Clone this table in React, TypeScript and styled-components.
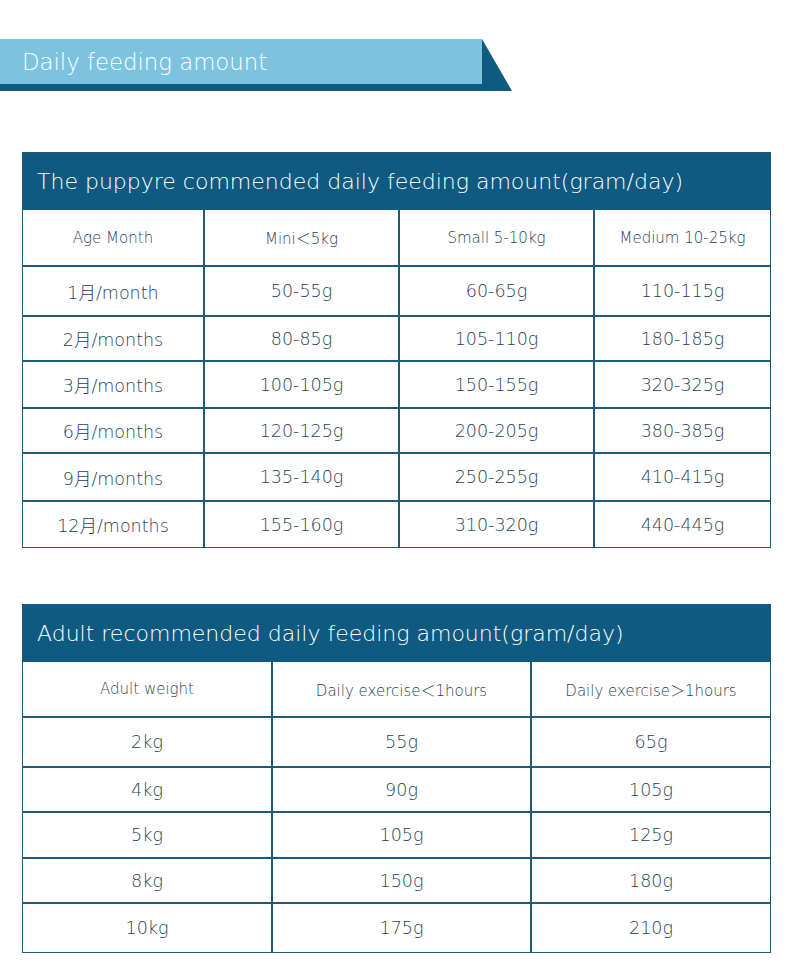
import React from 'react'
import styled, { createGlobalStyle } from 'styled-components'

const GlobalStyle = createGlobalStyle`
  body {
    margin: 0;
    background: #fff;
    font-family: "DejaVu Sans", "Noto Sans CJK JP", sans-serif;
    font-weight: 200;
  }
`

const DARK = '#0f5a80'
const LINE = '#1e5a7a'
const TEXT = '#1f3f58'

const Page = styled.div`
  width: 790px;
  padding-top: 39px;
  padding-bottom: 13px;
`

const Banner = styled.div`
  position: relative;
  width: 512px;
  height: 52px;
`

const BannerBar = styled.div`
  width: 460px;
  height: 45px;
  background: #7cc3df;
  border-bottom: 7px solid ${DARK};
  display: flex;
  align-items: center;
  padding-left: 22px;
  box-sizing: content-box;
  color: #fff;
  font-size: 22.8px;
`

const BannerTip = styled.svg`
  position: absolute;
  top: 0;
  right: 0;
`

const Table = styled.div<{ $top: number }>`
  margin: ${(p) => p.$top}px 19px 0 22px;
  width: 749px;
  border: 1.5px solid ${LINE};
  box-sizing: border-box;
`

const Title = styled.div`
  height: 57px;
  background: ${DARK};
  color: #fff;
  display: flex;
  align-items: center;
  padding-left: 14px;
  font-size: 22px;
`

const Row = styled.div<{ $cols: string; $h: number; $first?: boolean }>`
  display: grid;
  grid-template-columns: ${(p) => p.$cols};
  height: ${(p) => p.$h}px;
  border-top: ${(p) => (p.$first ? 'none' : `2px solid ${LINE}`)};
  box-sizing: border-box;
`

const Cell = styled.div<{ $head?: boolean }>`
  display: flex;
  align-items: center;
  justify-content: center;
  color: ${TEXT};
  font-size: ${(p) => (p.$head ? '15px' : '17.5px')};
  & + & {
    border-left: 2px solid ${LINE};
  }
`

type TableData = {
  title: string
  cols: string
  heights: number[]
  head: string[]
  rows: string[][]
}

const puppy: TableData = {
  title: 'The puppyre commended daily feeding amount(gram/day)',
  cols: '180px 195px 195px 1fr',
  heights: [55, 50, 45, 47, 45, 48, 47],
  head: ['Age Month', 'Mini＜5kg', 'Small 5-10kg', 'Medium 10-25kg'],
  rows: [
    ['1月/month', '50-55g', '60-65g', '110-115g'],
    ['2月/months', '80-85g', '105-110g', '180-185g'],
    ['3月/months', '100-105g', '150-155g', '320-325g'],
    ['6月/months', '120-125g', '200-205g', '380-385g'],
    ['9月/months', '135-140g', '250-255g', '410-415g'],
    ['12月/months', '155-160g', '310-320g', '440-445g'],
  ],
}

const adult: TableData = {
  title: 'Adult recommended daily feeding amount(gram/day)',
  cols: '248px 259px 1fr',
  heights: [54, 50, 45, 46, 45, 50],
  head: ['Adult weight', 'Daily exercise＜1hours', 'Daily exercise＞1hours'],
  rows: [
    ['2kg', '55g', '65g'],
    ['4kg', '90g', '105g'],
    ['5kg', '105g', '125g'],
    ['8kg', '150g', '180g'],
    ['10kg', '175g', '210g'],
  ],
}

const FeedTable = ({ data, top }: { data: TableData; top: number }) => (
  <Table $top={top}>
    <Title>{data.title}</Title>
    <Row $cols={data.cols} $h={data.heights[0]} $first>
      {data.head.map((h) => (
        <Cell key={h} $head>
          {h}
        </Cell>
      ))}
    </Row>
    {data.rows.map((r, i) => (
      <Row key={r[0]} $cols={data.cols} $h={data.heights[i + 1]}>
        {r.map((c, j) => (
          <Cell key={j}>{c}</Cell>
        ))}
      </Row>
    ))}
  </Table>
)

export default function App() {
  return (
    <>
      <GlobalStyle />
      <Page>
        <Banner>
          <BannerBar>Daily feeding amount</BannerBar>
          <BannerTip width="30" height="52" viewBox="0 0 30 52">
            <polygon points="0,0 30,52 0,52" fill={DARK} />
          </BannerTip>
        </Banner>
        <FeedTable data={puppy} top={61} />
        <FeedTable data={adult} top={56} />
      </Page>
    </>
  )
}
